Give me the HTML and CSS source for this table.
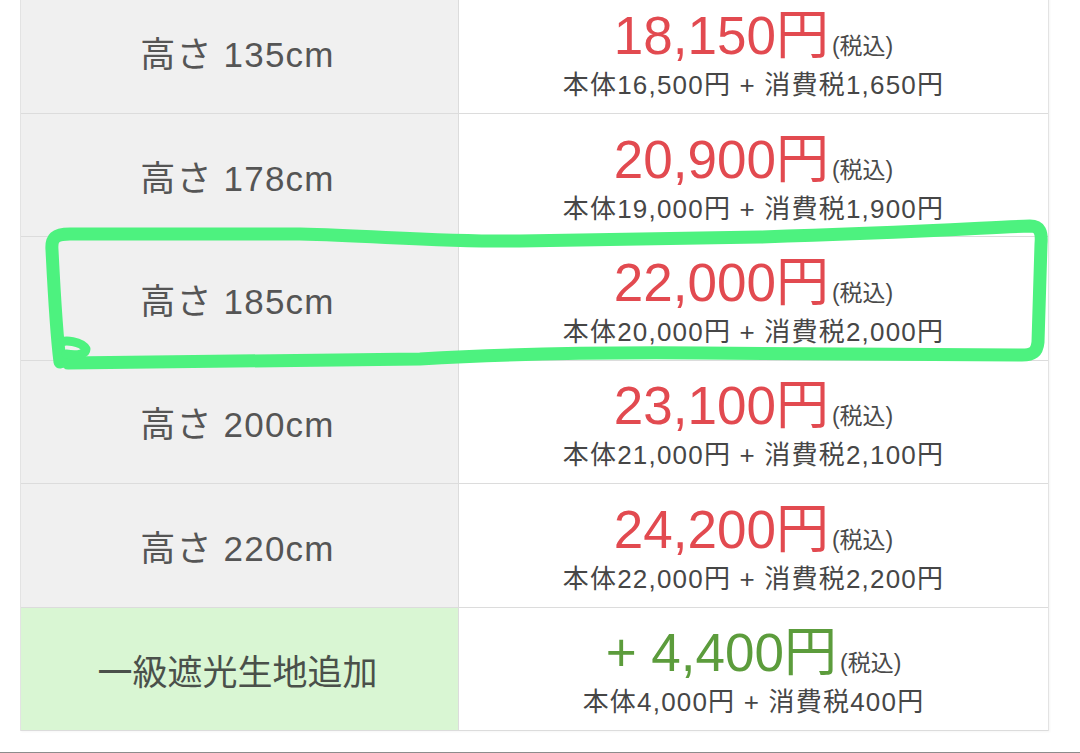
FILE: index.html
```html
<!DOCTYPE html>
<html lang="ja">
<head>
<meta charset="utf-8">
<title>価格表</title>
<link rel="stylesheet" href="styles.css">
</head>
<body>
<div class="page">
  <div class="price-table">
    <div class="row">
      <div class="label">高さ 135cm</div>
      <div class="price">
        <p class="total"><span class="amount">18,150円</span><span class="tax">(税込)</span></p>
        <p class="breakdown">本体16,500円 + 消費税1,650円</p>
      </div>
    </div>
    <div class="row">
      <div class="label">高さ 178cm</div>
      <div class="price">
        <p class="total"><span class="amount">20,900円</span><span class="tax">(税込)</span></p>
        <p class="breakdown">本体19,000円 + 消費税1,900円</p>
      </div>
    </div>
    <div class="row">
      <div class="label">高さ 185cm</div>
      <div class="price">
        <p class="total"><span class="amount">22,000円</span><span class="tax">(税込)</span></p>
        <p class="breakdown">本体20,000円 + 消費税2,000円</p>
      </div>
    </div>
    <div class="row">
      <div class="label">高さ 200cm</div>
      <div class="price">
        <p class="total"><span class="amount">23,100円</span><span class="tax">(税込)</span></p>
        <p class="breakdown">本体21,000円 + 消費税2,100円</p>
      </div>
    </div>
    <div class="row">
      <div class="label">高さ 220cm</div>
      <div class="price">
        <p class="total"><span class="amount">24,200円</span><span class="tax">(税込)</span></p>
        <p class="breakdown">本体22,000円 + 消費税2,200円</p>
      </div>
    </div>
    <div class="row row-option">
      <div class="label">一級遮光生地追加</div>
      <div class="price">
        <p class="total"><span class="amount">+ 4,400円</span><span class="tax">(税込)</span></p>
        <p class="breakdown">本体4,000円 + 消費税400円</p>
      </div>
    </div>
  </div>
  <div class="rule"></div>
  <svg class="marker" width="1080" height="753" viewBox="0 0 1080 753" aria-hidden="true">
    <path d="M60 362 C56 330 54 290 52 250 C51 238 55 234 70 234 L300 234 C380 236 440 242 520 241 L760 237 C900 233 980 228 1030 226 C1040 226 1042 232 1041 244 L1038 342 C1037 352 1033 355 1022 355 L700 353 C560 352 470 356 420 359 L68 363"
      fill="none" stroke="#4df27f" stroke-width="13" stroke-linecap="round" stroke-linejoin="round"/>
    <path d="M58 344 C64 338 82 342 86 349 C86 354 78 356 66 354"
      fill="none" stroke="#4df27f" stroke-width="9" stroke-linecap="round" stroke-linejoin="round"/>
  </svg>
</div>
</body>
</html>
```

FILE: styles.css
```css
* {
  box-sizing: border-box;
}

html, body {
  margin: 0;
  padding: 0;
  background: #ffffff;
}

.page {
  position: relative;
  width: 1080px;
  height: 753px;
  overflow: hidden;
  display: flex;
  flex-direction: column;
  font-family: "Liberation Sans", "Noto Sans CJK JP", sans-serif;
}

.price-table {
  margin: -9.4px 0 0 20px;
  width: 1029px;
  border-left: 1px solid #e3e3e3;
  border-right: 1px solid #e3e3e3;
  box-shadow: 1px 1px 2px rgba(0, 0, 0, 0.04);
}

.row {
  display: grid;
  grid-template-columns: 438px 1fr;
  height: 123.4px;
  border-bottom: 1px solid #dcdcdc;
}

.label {
  display: flex;
  align-items: center;
  justify-content: center;
  background: #f0f0f0;
  border-right: 1px solid #dcdcdc;
  color: #555555;
  font-size: 35px;
  letter-spacing: 1.2px;
  padding-right: 4px;
}

.row-option .label {
  background: #d9f6d3;
  letter-spacing: 0;
  color: #4a504a;
  padding-top: 2px;
}

.price {
  display: flex;
  flex-direction: column;
  align-items: center;
  justify-content: center;
  background: #ffffff;
  padding-top: 4px;
}

.total {
  margin: 0;
  display: flex;
  align-items: baseline;
  line-height: 1;
  color: #e24a50;
}

.amount {
  font-size: 53px;
}

.tax {
  font-size: 23px;
  color: #4a4a4a;
  margin-left: 3px;
}

.row-option .total {
  color: #5c9c3c;
}

.breakdown {
  margin: 10px 0 0;
  font-size: 26px;
  line-height: 1;
  color: #464646;
  letter-spacing: 1.2px;
}

.rule {
  margin-top: 21px;
  height: 2px;
  background: #8c8c8c;
}

.marker {
  position: absolute;
  left: 0;
  top: 0;
  pointer-events: none;
}
```
